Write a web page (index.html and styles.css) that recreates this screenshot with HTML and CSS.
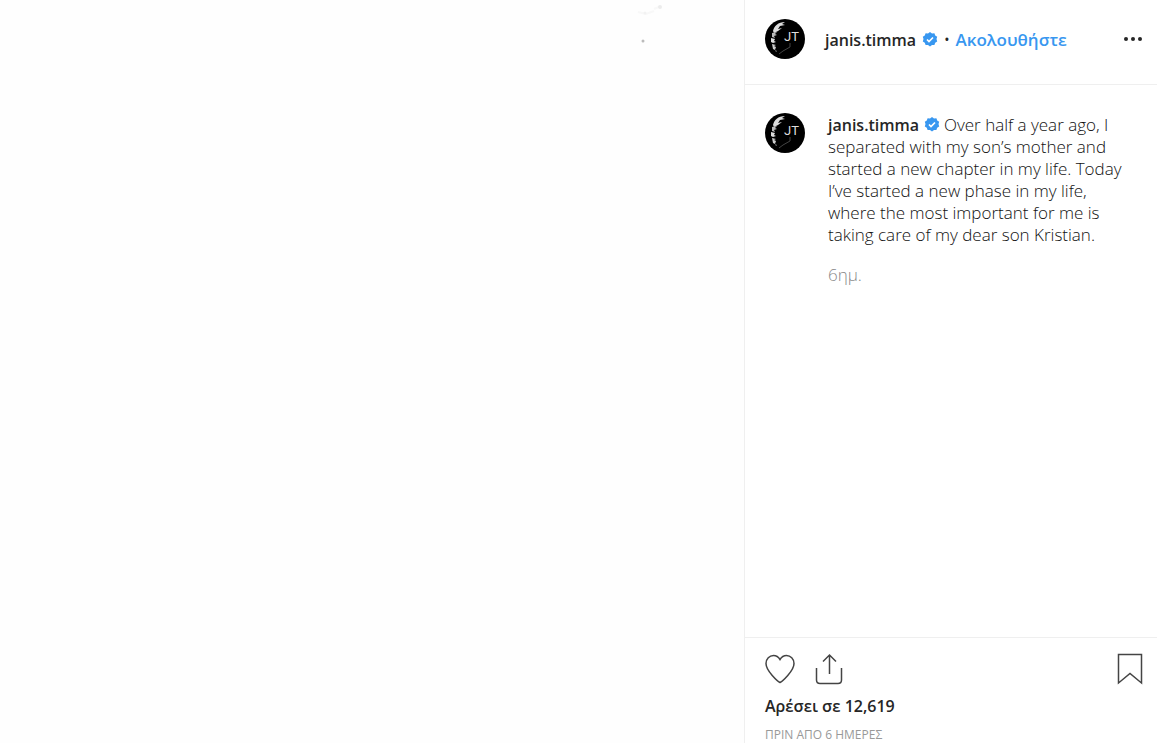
FILE: index.html
```html
<!DOCTYPE html>
<html lang="el">
<head>
  <meta charset="UTF-8" />
  <meta name="viewport" content="width=device-width, initial-scale=1.0" />
  <title>janis.timma</title>
  <link rel="stylesheet" href="styles.css">
</head>
<body>
  <svg class="symbols" aria-hidden="true">
    <symbol id="avatar" viewBox="0 0 40 40">
      <circle cx="20" cy="20" r="20" fill="#000" />
      <path d="M8 12C9 7 13 3 20 3l-3 2 3 1-5 1-2 3 4-1-4 3-4 2z" fill="#ddd" />
      <path d="M7 14l5-1-2 2 2 1-3 1 1 2-3-1z" fill="#bbb" />
      <path d="M6 19l4 1-1 2 2 1-3 1-2-1z" fill="#ddd" />
      <path d="M7 25l4 1-2 1 2 1-1 3-2-1z" fill="#ccc" />
      <path d="M10 31l2 1-1 1z" fill="#999" />
      <path d="M25 24v4l-7 4-4 3" fill="none" stroke="#444" stroke-width="1" />
      <text class="monogram" x="19" y="22">JT</text>
    </symbol>
    <symbol id="verified" viewBox="0 0 16 16">
      <path d="M8 0l2 1.400 2.400-.1.8 2.200 2 1.300-.7 2.300.7 2.400-2 1.300-.8 2.300-2.400-.1L8 14.500l-2-1.500-2.400.1-.8-2.300-2-1.300.7-2.400-.7-2.300 2-1.300.8-2.200L6 1.400z" fill="#3897f0" />
      <path d="M5 7.500l2 2 4-4" fill="none" stroke="#fff" stroke-width="1.700" />
    </symbol>
  </svg>

  <article class="post">
    <div class="media">
      <svg class="specks" width="60" height="48" viewBox="0 0 60 48" aria-hidden="true">
        <path d="M8 12l8 2 8-3M24 9l7-3" fill="none" stroke="#f8f8f8" stroke-width="2" />
        <circle cx="30" cy="7" r="2" fill="#ececec" />
        <circle cx="15" cy="13" r="1.500" fill="#f2f2f2" />
        <circle cx="13" cy="41" r="1.500" fill="#bbb" />
      </svg>
    </div>

    <div class="side">
      <header class="post-header">
        <a href="#" aria-label="janis.timma"><svg class="avatar"><use href="#avatar" /></svg></a>
        <div class="account">
          <a class="username" href="#">janis.timma</a>
          <svg class="verified"><use href="#verified" /></svg>
          <span class="dot">•</span>
          <button class="follow" type="button">Ακολουθήστε</button>
        </div>
        <button class="icon-button more" type="button" aria-label="Περισσότερα">
          <svg width="20" height="6" viewBox="0 0 20 6">
            <circle cx="3" cy="3" r="2" />
            <circle cx="10" cy="3" r="2" />
            <circle cx="17" cy="3" r="2" />
          </svg>
        </button>
      </header>

      <section class="comments">
        <a href="#" aria-label="janis.timma"><svg class="avatar"><use href="#avatar" /></svg></a>
        <div class="comment">
          <p class="caption"><a class="username" href="#">janis.timma</a> <svg class="verified"><use href="#verified" /></svg> Over half a year ago, I separated with my son’s mother and started a new chapter in my life. Today I’ve started a new phase in my life, where the most important for me is taking care of my dear son Kristian.</p>
          <time class="age">6ημ.</time>
        </div>
      </section>

      <footer class="post-footer">
        <div class="actions">
          <button class="icon-button" type="button" aria-label="Μου αρέσει">
            <svg width="30" height="32" viewBox="0 0 30 32">
              <path d="M15 29.500C13 28.500 1 18 1 10.500 1 6 4.500 2.500 8.500 2.500c3 0 5 1.500 6.500 4 1.500-2.500 3.500-4 6.500-4 4 0 7.500 3.500 7.500 8C29 18 17 28.500 15 29.500z" />
            </svg>
          </button>
          <button class="icon-button" type="button" aria-label="Κοινοποίηση">
            <svg width="28" height="32" viewBox="0 0 28 32">
              <path d="M1.500 15v12q0 3.500 3.500 3.500h18q3.500 0 3.500-3.500V15M14.500 21V2M8 8.500l6.500-6.500 6.500 6.500" />
            </svg>
          </button>
          <button class="icon-button save" type="button" aria-label="Αποθήκευση">
            <svg width="26" height="32" viewBox="0 0 26 32">
              <path d="M1.500 1.500h23v28.500L13 20.500 1.500 30z" />
            </svg>
          </button>
        </div>
        <a class="likes" href="#">Αρέσει σε 12,619</a>
        <time class="date">ΠΡΙΝ ΑΠΟ 6 ΗΜΕΡΕΣ</time>
      </footer>
    </div>
  </article>
</body>
</html>
```

FILE: styles.css
```css
* { box-sizing: border-box; }
body { margin: 0; background: #fff; color: #262626; font-family: "Segoe UI", "Open Sans", "Noto Sans", sans-serif; font-size: 17px; line-height: 22px; }
a { color: inherit; text-decoration: none; }
button { padding: 0; border: none; background: none; font: inherit; cursor: pointer; }
svg { display: block; }

.symbols { display: none; }
.monogram { fill: #ddd; font-family: Roboto, sans-serif; font-size: 13px; }

.post { display: grid; grid-template-columns: minmax(0, 1fr) 413px; height: 100vh; overflow: hidden; }
.media { display: flex; justify-content: flex-end; padding-right: 54px; background: #fefefe; }
.side { display: flex; flex-direction: column; min-height: 0; border-left: 1px solid #efefef; }

.avatar { width: 40px; height: 40px; }
.verified { display: inline-block; width: 16px; height: 16px; vertical-align: -2px; }
.username { font-size: 16px; font-weight: 600; }

.post-header { display: flex; align-items: center; gap: 20px; padding: 19px 14px 25px 20px; border-bottom: 1px solid #efefef; }
.account { display: flex; align-items: center; gap: 6px; padding-top: 2px; }
.dot { font-size: 14px; }
.follow { color: #3897f0; font-weight: 600; }
.more { margin-left: auto; }

.comments { display: flex; flex: 1; align-items: flex-start; gap: 23px; min-height: 0; padding: 28px 24px 0 20px; }
.comment { flex: 1; padding-top: 1px; }
.caption { margin: 0 0 18px; color: #111; font-weight: 300; }
.caption .username { color: #262626; }
.age { color: #888; font-weight: 300; }

.post-footer { padding: 15px 14px 0 20px; border-top: 1px solid #efefef; }
.actions { display: flex; align-items: center; gap: 20px; }
.icon-button svg { fill: none; stroke: #444; stroke-width: 1.5; }
.icon-button.more svg { fill: #262626; stroke: none; }
.save { margin-left: auto; }
.likes { display: block; margin-top: 10px; font-size: 16px; font-weight: 600; }
.date { display: block; margin-top: 10px; color: #999; font-size: 12px; line-height: 16px; }
```
